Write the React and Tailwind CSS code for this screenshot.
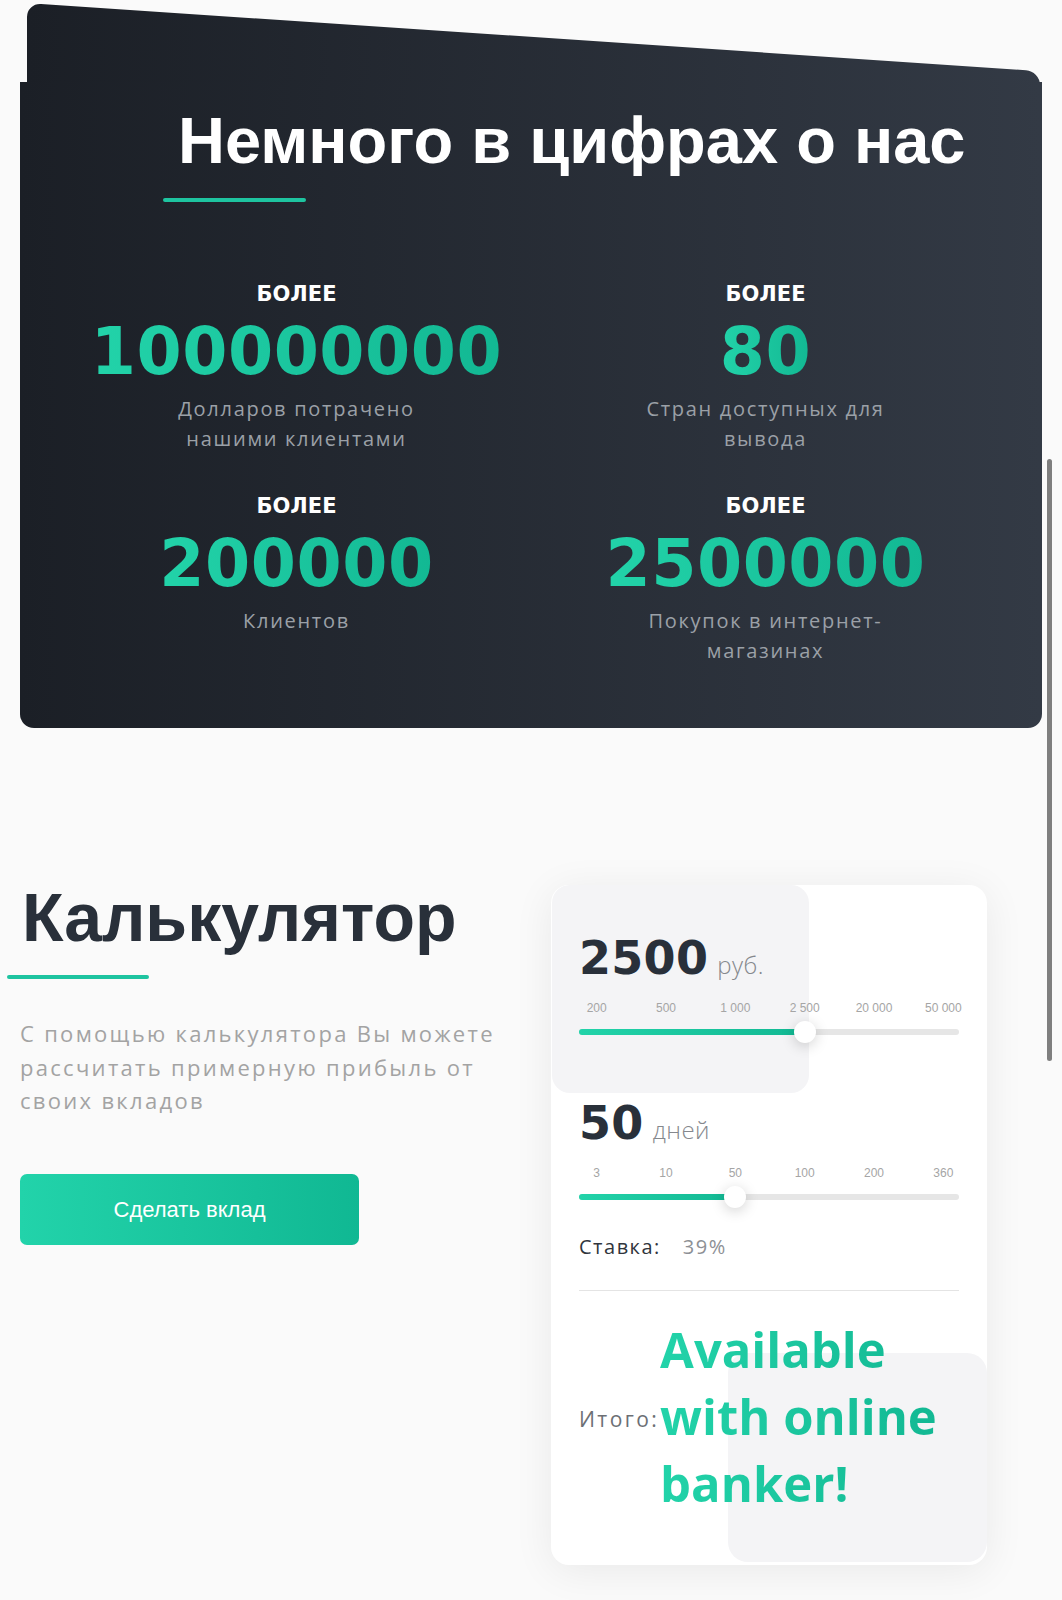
const STATS = [
  { value: "100000000", lines: ["Долларов потрачено", "нашими клиентами"] },
  { value: "80", lines: ["Стран доступных для", "вывода"] },
  { value: "200000", lines: ["Клиентов"] },
  { value: "2500000", lines: ["Покупок в интернет-", "магазинах"] },
];

const SLIDERS = [
  {
    value: "2500",
    unit: "руб.",
    ticks: ["200", "500", "1 000", "2 500", "20 000", "50 000"],
    active: 3,
  },
  {
    value: "50",
    unit: "дней",
    ticks: ["3", "10", "50", "100", "200", "360"],
    active: 2,
  },
];

// tick grid is 416px wide and starts 17px left of the track
const TICK_CELL = 416 / 6;
const TICK_OFFSET = -17;

export default function App() {
  return (
    <div className="relative min-h-screen overflow-hidden bg-[#fafafa] pb-[37px]">
      {/* Stats */}
      <section className="relative mx-[20px] mt-[82px]">
        <div
          aria-hidden
          className="absolute left-[7px] top-[-79px] h-[170px] w-[1013px] origin-top-left skew-y-[3.85deg] rounded-[14px] bg-linear-to-r from-[#1b1f26] to-[#333a45]"
        />
        <div className="relative rounded-b-[14px] bg-linear-to-r from-[#1b1f26] to-[#333a45] pt-[26px] pb-[62px]">
          <div className="pl-[143px]">
            <h1 className="ml-[15px] font-['Liberation_Sans',Arial,sans-serif] text-[65px] font-bold leading-[66px] text-white">
              Немного в цифрах о нас
            </h1>
            <div className="mt-[24px] h-[4px] w-[143px] rounded-full bg-[#1ec4a0]" />
          </div>

          <div className="mt-[80px] grid grid-cols-2 gap-y-[40px] px-[42px]">
            {STATS.map((stat) => (
              <Stat key={stat.value} stat={stat} />
            ))}
          </div>
        </div>
      </section>

      {/* Calculator */}
      <section className="mt-[156px] flex items-start pl-[20px]">
        <div className="w-[531px]">
          <h2 className="ml-[2px] font-['Liberation_Sans',Arial,sans-serif] text-[68px] font-bold leading-[67px] text-[#29303a]">
            Калькулятор
          </h2>
          <div className="-ml-[13px] mt-[24px] h-[4px] w-[142px] rounded-full bg-[#1ec4a0]" />
          <p className="mt-[38px] font-['Open_Sans',sans-serif] text-[22px] leading-[33.5px] tracking-[2.3px] text-[#a3a3a3]">
            С помощью калькулятора Вы можете
            <br />
            рассчитать примерную прибыль от
            <br />
            своих вкладов
          </p>
          <button className="mt-[56px] flex h-[71px] w-[339px] items-center justify-center rounded-[7px] bg-linear-to-r from-[#22d3aa] to-[#10b893] font-['Liberation_Sans',Arial,sans-serif] text-[22px] text-white">
            Сделать вклад
          </button>
        </div>

        <div className="relative mt-[1px] w-[436px] overflow-hidden rounded-[18px] bg-white shadow-[0_6px_40px_rgba(0,0,0,0.07)]">
          <div aria-hidden className="absolute left-[1px] top-0 h-[208px] w-[257px] rounded-[18px] bg-[#f4f4f6]" />
          <div aria-hidden className="absolute left-[177px] top-[468px] h-[209px] w-[259px] rounded-[20px] bg-[#f4f4f6]" />

          <div className="relative px-[28px] pt-[51px] pb-[48px]">
            {SLIDERS.map((s, i) => (
              <Slider key={s.unit} slider={s} first={i === 0} />
            ))}

            <div className="mt-[33px] flex font-['Open_Sans',sans-serif] text-[20px] leading-[28px] tracking-[1.5px]">
              <span className="text-[#30353c]">Ставка:</span>
              <span className="ml-[22px] text-[#8d9095]">39%</span>
            </div>

            <div className="mt-[29px] h-px bg-[#e4e4e4]" />

            <div className="mt-[25px] flex items-center">
              <span className="mt-[5px] font-['Open_Sans',sans-serif] text-[21px] leading-[28px] tracking-[2.4px] text-[#6c6f74]">
                Итого:
              </span>
              <span className="ml-[1px] bg-linear-to-r from-[#22d3a9] to-[#12b893] bg-clip-text font-['Open_Sans',sans-serif] text-[49px] font-bold leading-[67px] text-transparent">
                Available
                <br />
                with online
                <br />
                banker!
              </span>
            </div>
          </div>
        </div>
      </section>

      {/* overlay scrollbar */}
      <div aria-hidden className="absolute left-[1047px] top-[459px] h-[602px] w-[5px] rounded-full bg-[#7f7f7f]" />
    </div>
  );
}

function Stat({ stat }) {
  return (
    <div className="flex flex-col items-center text-center">
      <div className="font-['DejaVu_Sans',sans-serif] text-[21px] font-bold leading-[25px] text-white">
        БОЛЕЕ
      </div>
      <div className="mt-[13px] bg-linear-to-r from-[#22d3a9] to-[#12b893] bg-clip-text font-['DejaVu_Sans',sans-serif] text-[65px] font-bold leading-[64px] tracking-[0.5px] text-transparent">
        {stat.value}
      </div>
      <p className="mt-[10px] font-['Open_Sans',sans-serif] text-[20px] leading-[30px] tracking-[1.7px] text-[#9ba0a7]">
        {stat.lines.map((line, i) => (
          <span key={line}>
            {i > 0 && <br />}
            {line}
          </span>
        ))}
      </p>
    </div>
  );
}

function Slider({ slider, first }) {
  const pos = TICK_OFFSET + TICK_CELL / 2 + TICK_CELL * slider.active;

  return (
    <div className={first ? "" : "mt-[66px]"}>
      <div className="flex items-baseline">
        <span className="font-['DejaVu_Sans',sans-serif] text-[46px] font-bold leading-[45px] tracking-[0.3px] text-[#29303a]">
          {slider.value}
        </span>
        <span className="ml-[9px] font-['Open_Sans',sans-serif] text-[24px] font-light tracking-[0.5px] text-[#85888d]">
          {slider.unit}
        </span>
      </div>

      <div className="-ml-[17px] mt-[17px] grid w-[416px] grid-cols-6 text-center font-['Liberation_Sans',Arial,sans-serif] text-[12px] leading-[16px] text-[#a5a5a5]">
        {slider.ticks.map((t) => (
          <span key={t}>{t}</span>
        ))}
      </div>

      <div className="relative mt-[13px] h-[6px] rounded-full bg-[#e6e6e6]">
        <div
          className="absolute left-0 top-0 h-full rounded-full bg-linear-to-r from-[#22d3a9] to-[#12b893]"
          style={{ width: pos }}
        />
        <div
          className="absolute top-1/2 h-[22px] w-[22px] -translate-x-1/2 -translate-y-1/2 rounded-full bg-white shadow-[0_3px_14px_rgba(0,0,0,0.18)]"
          style={{ left: pos }}
        />
      </div>
    </div>
  );
}
